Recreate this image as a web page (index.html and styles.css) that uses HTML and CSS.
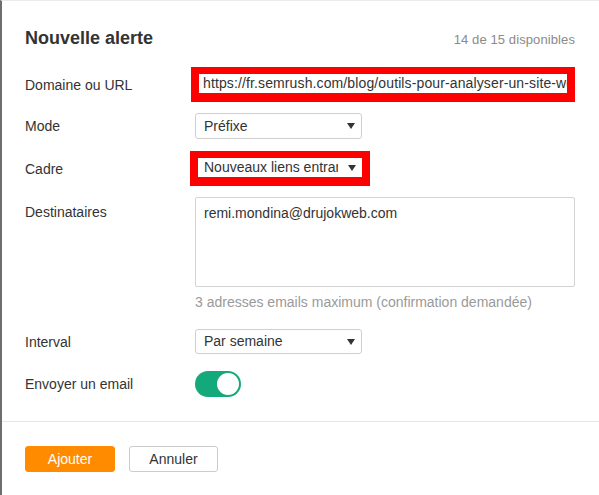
FILE: index.html
```html
<!DOCTYPE html>
<html lang="fr">
<head>
<meta charset="utf-8">
<title>Nouvelle alerte</title>
<link rel="stylesheet" href="styles.css">
</head>
<body>
<div class="modal">
  <div class="content">
    <div class="header">
      <h1 class="title">Nouvelle alerte</h1>
      <span class="quota">14 de 15 disponibles</span>
    </div>

    <div class="row row-domain">
      <label class="label">Domaine ou URL</label>
      <div class="field">
        <div class="hl hl-domain"><span class="clip">https://fr.semrush.com/blog/outils-pour-analyser-un-site-web/</span></div>
      </div>
    </div>

    <div class="row row-mode">
      <label class="label">Mode</label>
      <div class="field">
        <div class="select"><span class="clip">Préfixe</span><span class="caret"></span></div>
      </div>
    </div>

    <div class="row row-cadre">
      <label class="label">Cadre</label>
      <div class="field">
        <div class="hl hl-cadre"><span class="clip">Nouveaux liens entrants</span><span class="caret"></span></div>
      </div>
    </div>

    <div class="row row-dest">
      <label class="label">Destinataires</label>
      <div class="field">
        <div class="textarea">remi.mondina@drujokweb.com</div>
        <div class="help">3 adresses emails maximum (confirmation demandée)</div>
      </div>
    </div>

    <div class="row row-interval">
      <label class="label">Interval</label>
      <div class="field">
        <div class="select"><span class="clip">Par semaine</span><span class="caret"></span></div>
      </div>
    </div>

    <div class="row row-toggle">
      <label class="label">Envoyer un email</label>
      <div class="field">
        <div class="toggle"><span class="knob"></span></div>
      </div>
    </div>
  </div>

  <div class="divider"></div>

  <div class="footer">
    <button class="btn btn-primary">Ajouter</button>
    <button class="btn btn-secondary">Annuler</button>
  </div>
</div>
</body>
</html>
```
FILE: styles.css
```css
html, body {
  margin: 0;
  padding: 0;
  background: #fff;
}
body {
  font-family: "Liberation Sans", Arial, sans-serif;
  color: #333;
  font-size: 14px;
}
.modal {
  width: 599px;
  height: 495px;
  box-sizing: border-box;
  border-left: 2px solid #6e6e6e;
  border-top: 1px solid #ececec;
}
.content {
  padding: 26px 24px 0 23px;
}
.header {
  display: flex;
  justify-content: space-between;
  align-items: center;
  height: 22px;
}
.title {
  margin: 0;
  font-size: 18px;
  line-height: 22px;
  font-weight: bold;
  color: #333;
}
.quota {
  font-size: 13px;
  color: #8a8a8a;
  padding-top: 2px;
  letter-spacing: 0.1px;
}
.row {
  display: grid;
  grid-template-columns: 170px 1fr;
  align-items: center;
}
.label {
  font-size: 14px;
  line-height: 18px;
  color: #333;
}
.row-domain { margin-top: 18px; }
.row-mode { margin-top: 11px; }
.row-cadre { margin-top: 12px; }
.row-dest { margin-top: 11px; align-items: start; }
.row-dest .label { padding-top: 6px; }
.row-interval { margin-top: 18px; }
.row-toggle { margin-top: 17px; }

.clip {
  display: block;
  flex: 1;
  min-width: 0;
  overflow: hidden;
  white-space: nowrap;
  line-height: 19px;
}
.hl {
  box-sizing: border-box;
  height: 35px;
  border: 8px solid #ff0000;
  border-top-width: 7px;
  border-bottom-width: 9px;
  background: #fff;
  display: flex;
  align-items: center;
  color: #333;
}
.hl-domain {
  margin-left: -4px;
  width: 384px;
  padding: 0 0 0 4px;
  letter-spacing: 0.12px;
}
.hl-cadre {
  margin-left: -5px;
  width: 180px;
  padding: 0 6px 0 6px;
  gap: 10px;
}
.select {
  box-sizing: border-box;
  width: 167px;
  height: 26px;
  border: 1px solid #cfcfcf;
  border-radius: 3px;
  display: flex;
  align-items: center;
  padding: 0 6px 0 8px;
  gap: 8px;
}
.row-interval .select { height: 25px; }
.caret {
  width: 0;
  height: 0;
  border-left: 4px solid transparent;
  border-right: 4px solid transparent;
  border-top: 6px solid #333;
  flex: none;
}
.textarea {
  box-sizing: border-box;
  height: 90px;
  border: 1px solid #d4d4d4;
  border-radius: 2px;
  padding: 6px 8px;
  line-height: 18px;
}
.help {
  margin-top: 6px;
  font-size: 14px;
  line-height: 18px;
  color: #9a9a9a;
}
.toggle {
  box-sizing: border-box;
  width: 46px;
  height: 26px;
  border-radius: 13px;
  background: #13a97a;
  display: flex;
  align-items: center;
  justify-content: flex-end;
  padding-right: 2px;
}
.knob {
  width: 22px;
  height: 22px;
  border-radius: 50%;
  background: #fff;
}
.divider {
  margin-top: 24px;
  height: 1px;
  background: #e6e6e6;
}
.footer {
  display: flex;
  gap: 14px;
  padding: 24px 0 0 23px;
}
.btn {
  box-sizing: border-box;
  height: 26px;
  border-radius: 3px;
  font-family: "Liberation Sans", Arial, sans-serif;
  font-size: 14px;
  padding: 0;
  cursor: pointer;
}
.btn-primary {
  width: 90px;
  background: #ff8c00;
  border: 1px solid #ff8c00;
  color: #fff;
}
.btn-secondary {
  width: 89px;
  background: #fff;
  border: 1px solid #cccccc;
  color: #333;
}
```
